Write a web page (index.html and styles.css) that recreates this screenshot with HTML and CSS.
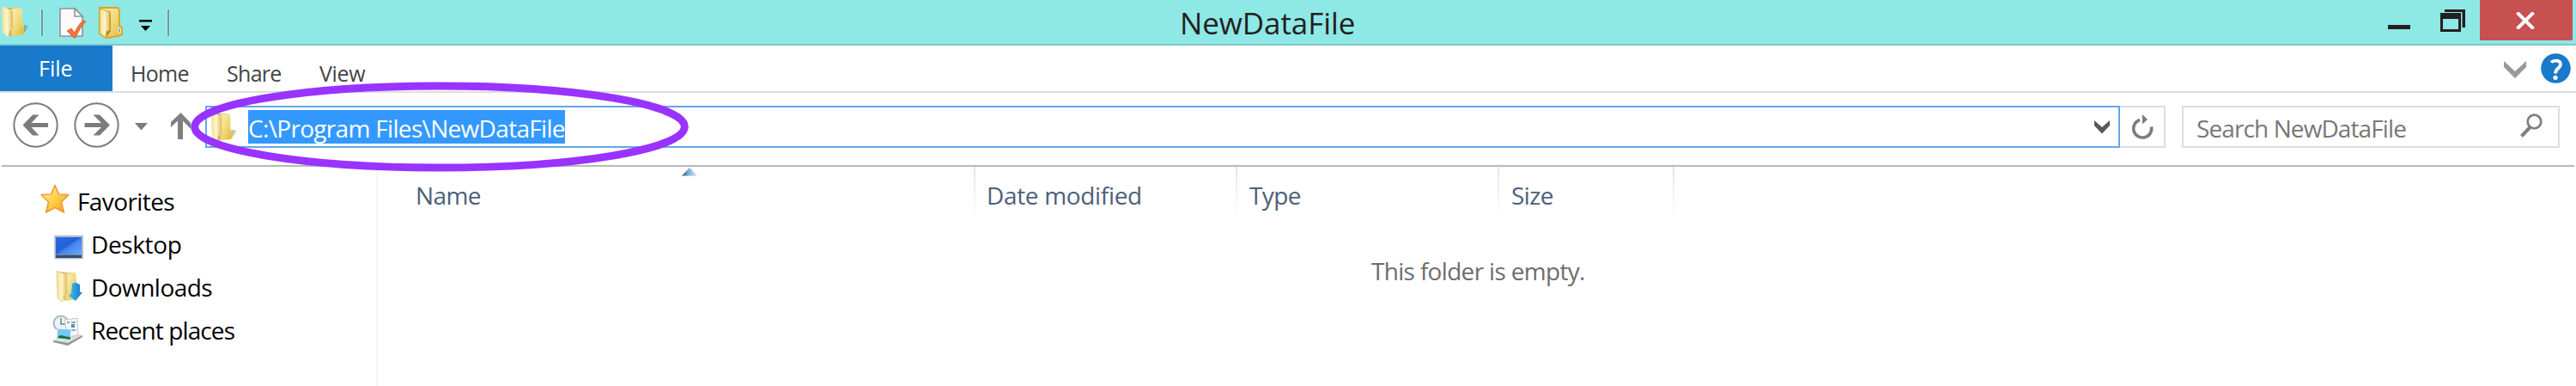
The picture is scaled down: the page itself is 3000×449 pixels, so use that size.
FILE: index.html
```
<!DOCTYPE html>
<html lang="en">
<head>
<meta charset="utf-8">
<title>NewDataFile</title>
<link rel="stylesheet" href="styles.css">
</head>
<body>
<svg class="defs" width="0" height="0">
  <defs>
    <linearGradient id="gold" x1="0" x2="1" y1="0" y2="1"><stop offset="0" stop-color="#fdf3bd"/><stop offset=".55" stop-color="#efd679"/><stop offset="1" stop-color="#e3b92e"/></linearGradient>
    <linearGradient id="flap" x1="0" x2="1"><stop offset="0" stop-color="#f2dd93"/><stop offset=".5" stop-color="#fff5cc"/><stop offset="1" stop-color="#dcbc58"/></linearGradient>
    <linearGradient id="inner" x1="0" x2="1"><stop offset="0" stop-color="#a98e45"/><stop offset=".5" stop-color="#e8cf7b"/><stop offset="1" stop-color="#f8e9a4"/></linearGradient>
    <linearGradient id="shade" x1="0" x2="1"><stop offset="0" stop-color="#555" stop-opacity=".65"/><stop offset="1" stop-color="#555" stop-opacity="0"/></linearGradient>
    <linearGradient id="starfill" x1="0" x2="1" y1="0" y2="1"><stop offset="0" stop-color="#fff3a0"/><stop offset=".5" stop-color="#ffd048"/><stop offset="1" stop-color="#f79a1c"/></linearGradient>
    <linearGradient id="screen" x1="0" x2="1" y1="0" y2="1"><stop offset="0" stop-color="#2c6be0"/><stop offset=".45" stop-color="#2160d8"/><stop offset=".55" stop-color="#4585ee"/><stop offset="1" stop-color="#6ba6fa"/></linearGradient>
    <linearGradient id="down" x1="0" x2="1"><stop offset="0" stop-color="#46c0f2"/><stop offset="1" stop-color="#1273c4"/></linearGradient>
    <linearGradient id="sortfill" x1="0" x2="1"><stop offset="0" stop-color="#23506e"/><stop offset=".45" stop-color="#7fb6d4"/><stop offset="1" stop-color="#c9ecfb"/></linearGradient>
    <symbol id="folder" viewBox="0 0 34 38">
      <path d="M24 34 L34 23 L27 22Z" fill="url(#shade)"/>
      <path d="M4 2 L23 2 L25 5 L25 21 L27 24 L27 32 L23 34 L9 35Z" fill="url(#inner)"/>
      <path d="M12 4 L24 2.500 L24.500 22 L27 24 L27 32 L24 34 L13 34Z" fill="url(#gold)"/>
      <path d="M1 2 L4 1 L14 6 L14 27 L10 29 L9 36 L2 31Z" fill="url(#flap)"/>
    </symbol>
  </defs>
</svg>
<div class="window">
  <header class="titlebar">
    <div class="quick">
      <svg class="q-folder" width="36" height="38"><use href="#folder" width="34" height="38"/></svg>
      <i class="bar bar-a"></i>
      <svg class="q-doc" width="32" height="38" viewBox="0 0 32 38"><path d="M1 2H18L27 11V34H1Z" fill="#fbfbfc" stroke="#8f9296" stroke-width="1.600"/><path d="M18 2V11H27Z" fill="#fff" stroke="#8f9296" stroke-width="1.600"/><path d="M9 28L14 25L18 30C20 25 24 19 28 15.500L31 17C26 22 22 29 19 36H17Z" fill="#ee7440" stroke="#d9602f" stroke-width=".8"/></svg>
      <svg class="q-open" width="30" height="38" viewBox="0 0 30 38"><path d="M1 1H22L24 4V22L27 24V32L23 34L9 36L1 31Z" fill="url(#gold)" stroke="#dba520" stroke-width="1.800"/><path d="M9 35L11 14L14 6V28Z" fill="#a58127"/><path d="M1 2L13 6V27L9 29L8 36L1 31Z" fill="url(#flap)" stroke="#dba520" stroke-width="1.200"/><path d="M23 25h2.500v5h-2.500z" fill="#5b9fe0" stroke="#fff" stroke-width=".8"/></svg>
      <svg class="q-drop" width="16" height="14" viewBox="0 0 16 14"><path d="M0 0H15V2.500H0ZM2 7H13L7.500 13Z" fill="#000"/></svg>
      <i class="bar bar-b"></i>
    </div>
    <h1 class="t title">NewDataFile</h1>
    <div class="controls">
      <svg class="c-min" width="26" height="5"><rect width="26" height="5" fill="#231f20"/></svg>
      <svg class="c-max" width="29" height="26" viewBox="0 0 29 26"><path d="M5 0H29V21H25.500V3H5Z" fill="#231f20"/><path fill-rule="evenodd" d="M0 4H24V26H0ZM3 11V23H21V11Z" fill="#231f20"/></svg>
      <button class="close"><svg width="24" height="20" viewBox="0 0 24 20"><path d="M2.500 .5L21.500 19.500M21.500 .5L2.500 19.500" stroke="#fff" stroke-width="4"/></svg></button>
    </div>
  </header>
  <nav class="ribbon">
    <span class="file"><b class="t tab-file">File</b></span>
    <span class="t tab home">Home</span>
    <span class="t tab share">Share</span>
    <span class="t tab view">View</span>
    <svg class="r-chev" width="26" height="20" viewBox="0 0 26 20"><path d="M0 0L13 12L26 0V7L13 20L0 7Z" fill="#999"/></svg>
    <svg class="r-help" width="36" height="36" viewBox="0 0 36 36"><circle cx="17.500" cy="17.500" r="17.300" fill="#1979ca"/><path d="M12 10.500C14 8.500 23 6.500 23 13C23 17.500 17 17 17 23.500" fill="none" stroke="#fff" stroke-width="3.800"/><circle cx="17" cy="28.300" r="2.600" fill="#fff"/></svg>
  </nav>
  <div class="address">
    <svg class="a-back" width="54" height="54" viewBox="0 0 54 54"><circle cx="27.500" cy="27.500" r="25.200" fill="none" stroke="#7c7c7c" stroke-width="2"/><path d="M12.500 27.500L24 15.500H31.500L22.500 25H42V30H22.500L31.500 39.500H24Z" fill="#7c7c7c"/></svg>
    <svg class="a-fwd" width="54" height="54" viewBox="0 0 54 54"><circle cx="27.500" cy="27.500" r="25.200" fill="none" stroke="#7c7c7c" stroke-width="2"/><path d="M43 27.500L31 15.500H23.500L33 25H13.500V30H33L23.500 39.500H31Z" fill="#7c7c7c"/></svg>
    <svg class="a-drop" width="15" height="9"><path d="M0 0H15L7.500 8.500Z" fill="#7c7c7c"/></svg>
    <svg class="a-up" width="23" height="31" viewBox="0 0 23 31"><path d="M11.500 0L23 12V19L14 9.500V31H8V9.500L0 17V11Z" fill="#808080"/></svg>
    <div class="path">
      <svg class="p-folder" width="34" height="36" viewBox="0 0 34 38"><use href="#folder" width="34" height="38"/></svg>
      <span class="sel"><span class="t path-text">C:\Program Files\NewDataFile</span></span>
      <svg class="p-chev" width="18" height="16" viewBox="0 0 18 16"><path d="M0 0L9 8L18 0V6L9 15.500L0 6Z" fill="#585858"/></svg>
    </div>
    <div class="refresh"><svg width="25" height="30" viewBox="0 0 25 30"><path d="M9 6.500A10.500 10.500 0 1 0 22.500 14.500" fill="none" stroke="#7c7c7c" stroke-width="3.600"/><path d="M12 0L18 6L12 11.500Z" fill="#7c7c7c"/></svg></div>
    <div class="search">
      <span class="t search-text">Search NewDataFile</span>
      <svg width="26" height="28" viewBox="0 0 26 28"><circle cx="16.500" cy="9.500" r="7.800" fill="none" stroke="#808080" stroke-width="2.800"/><path d="M11.500 16L1.500 26.500" stroke="#808080" stroke-width="4"/></svg>
    </div>
  </div>
  <main class="body">
    <aside class="side">
      <div class="row fav"><svg width="36" height="36" viewBox="0 0 36 36"><path d="M18 1.500L22.500 12L34 12.500L25.500 21L28.500 33L18 27.500L7.500 33L10.500 21L2 12.500L13.500 12Z" fill="url(#starfill)" stroke="#ee9b35" stroke-width="1.600" stroke-linejoin="round"/></svg><span class="t favorites">Favorites</span></div>
      <div class="row"><svg width="40" height="40" viewBox="0 0 40 40"><path d="M6.500 10H40V37H6.500Z" fill="#a9b7cf" stroke="#c3ccd8"/><path d="M8 12H38V32H8Z" fill="url(#screen)"/><path d="M8 32.500H38V36H8Z" fill="#384c70"/></svg><span class="t desktop">Desktop</span></div>
      <div class="row"><svg width="40" height="40" viewBox="0 0 40 40"><path d="M9 2L31 3L32 7V34L18 36Z" fill="url(#inner)"/><path d="M21 6L31 3L32 33L21 36Z" fill="url(#gold)"/><path d="M9 1L21 6V28L17 30L16 37L10 33Z" fill="url(#flap)" stroke="#e5cd84" stroke-width=".8"/><path d="M27 16L31 14.500L36 17V26H39L31 36L23 30L26 27Z" fill="url(#down)"/></svg><span class="t downloads">Downloads</span></div>
      <div class="row"><svg width="40" height="40" viewBox="0 0 40 40"><path d="M5 32L26 24L39 26V28L22 38L5 34Z" fill="#8f969b"/><path d="M5 32L26 22L39 26L22 35Z" fill="#d9dee0"/><circle cx="14" cy="12" r="8.500" fill="#eef3f5" stroke="#a9b8be" stroke-width="2"/><path d="M14 6V13H19" fill="none" stroke="#70828b" stroke-width="1.500"/><path d="M18 8L33 6L34 26L22 28Z" fill="#f4f5f5" stroke="#c2c7c9"/><path d="M21 11H24M26 11H31M25 20H31" stroke="#9aa4aa" stroke-width="2"/><path d="M26 13H30V17H26Z" fill="#3d98dd"/><path d="M10 18L26 19L25 31L9 30Z" fill="#73c9f7" stroke="#eef6fa"/><path d="M10 29C13 23 17 28 25 28V31Z" fill="#24713f"/></svg><span class="t recent">Recent places</span></div>
    </aside>
    <section class="content">
      <div class="cols">
        <div class="col c1"><span class="t name">Name</span><svg class="sort" width="18" height="10"><path d="M0 9.500L9 0L18 9.500Z" fill="url(#sortfill)"/></svg></div>
        <div class="col c2"><span class="t date">Date modified</span></div>
        <div class="col c3"><span class="t type">Type</span></div>
        <div class="col c4"><span class="t size">Size</span></div>
      </div>
      <p class="t empty">This folder is empty.</p>
    </section>
  </main>
  <svg class="ring" width="580" height="105" viewBox="0 0 580 105"><ellipse cx="290" cy="52.500" rx="285.300" ry="47.500" fill="none" stroke="#9933ff" stroke-width="9"/></svg>
</div>
</body>
</html>
```
FILE: styles.css
```
* { box-sizing: border-box; }
body { margin: 0; background: #fff; font-family: "Open Sans", "Noto Sans", sans-serif; overflow: hidden; }
svg { display: block; flex: none; }
.t { white-space: nowrap; display: block; }
.defs { position: absolute; }
.window { position: relative; width: 3000px; height: 449px; overflow: hidden; }

.titlebar { display: flex; justify-content: space-between; height: 53px; background: #8ee8e6; border-bottom: 2px solid #7cc9c9; }
.quick { display: flex; align-items: flex-start; width: 1374px; padding-top: 7px; padding-left: 1px; }
.bar { width: 2px; height: 31px; margin-top: 4px; background: #6f9a9c; box-shadow: 0 0 0 1px #a3ecea; }
.bar-a { margin-left: 11px; }
.q-doc { margin: 1px 0 0 19px; }
.q-open { margin: 1px 0 0 14px; }
.q-drop { margin: 16px 0 0 17px; }
.bar-b { margin-left: 17px; }
.title { margin: 0; flex: 1; font-size: 35px; font-weight: 400; line-height: 54px; letter-spacing: -.1px; color: #231f20; }
.controls { display: flex; width: 219px; flex: none; align-items: flex-start; }
.c-min { margin-top: 29px; }
.c-max { margin: 11px 0 0 35px; }
.close { display: flex; align-items: center; justify-content: center; width: 108px; height: 47px; margin-left: 17px; padding: 0 2px 0 0; border: 0; background: #c75050; }

.ribbon { display: flex; height: 55px; border-bottom: 2px solid #dedede; font-size: 25px; color: #444; }
.file { width: 131px; height: 53px; background: #1979ca; color: #fff; padding-left: 45px; }
.tab-file { font-weight: 400; line-height: 53px; }
.tab { line-height: 64px; flex: none; letter-spacing: -.7px; }
.home { margin-left: 21px; width: 112px; }
.share { width: 108px; }
.view { width: 60px; letter-spacing: -.3px; }
.r-chev { margin: 18px 0 0 auto; }
.r-help { margin: 9px 5px 0 17px; }

.address { display: flex; align-items: flex-start; height: 84px; padding-top: 15px; }
.a-back { margin: -5px 0 0 14px; }
.a-fwd { margin: -5px 0 0 17px; }
.a-drop { margin: 20px 0 0 18px; }
.a-up { margin: 8px 0 0 27px; }
.path { display: flex; align-items: flex-start; width: 2230px; height: 49px; margin-left: 17px; border: 2px solid #65a7e8; flex: none; }
.p-folder { margin: 5px 0 0 3px; }
.sel { width: 369px; height: 39px; margin: 3px 0 0 11px; background: #3399ff; color: #fff; }
.path-text { font-size: 28px; line-height: 42px; letter-spacing: -.68px; }
.p-chev { margin: 15px 10px 0 auto; }
.refresh { width: 53px; height: 49px; border: 2px solid #dedede; border-left: 0; padding: 8px 0 0 14px; }
.search { display: flex; justify-content: space-between; width: 440px; height: 49px; margin-left: 19px; padding: 0 18px 0 15px; border: 2px solid #dedede; color: #777; }
.search-text { font-size: 28px; line-height: 49px; letter-spacing: -.9px; }
.search svg { margin-top: 7px; }

.body { display: flex; height: 257px; margin: 0 2px; border-top: 2px solid #b9b9b9; }
.side { width: 438px; padding-top: 19px; border-right: 2px solid #f5f5f5; font-size: 28px; color: #000; }
.row { display: flex; height: 50px; padding-left: 55px; }
.row .t { line-height: 60px; margin-top: -9px; margin-left: 9px; }
.row svg { margin-top: 1px; }
.fav { padding-left: 44px; }
.row .favorites { margin-left: 8px; letter-spacing: -.6px; }
.desktop { letter-spacing: -.37px; }
.downloads { letter-spacing: -.54px; }
.recent { letter-spacing: -.9px; }
.content { flex: 1; }
.cols { display: flex; height: 59px; font-size: 28px; line-height: 66px; letter-spacing: -.6px; color: #4c607a; }
.col { border-right: 2px solid; border-image: linear-gradient(#dbe6f5, #fff) 1; }
.c1 { display: flex; width: 696px; padding-left: 44px; }
.name { width: 76px; }
.sort { margin-left: 234px; margin-top: 1px; }
.c2 { width: 305px; padding-left: 13px; letter-spacing: -.33px; }
.c3 { width: 305px; padding-left: 14px; }
.c4 { width: 204px; padding-left: 14px; }
.empty { margin: 42px 0 0 1157px; font-size: 28px; line-height: 40px; letter-spacing: -.68px; color: #6d6d6d; }
.ring { position: absolute; left: 222.200px; top: 94.500px; }
```
